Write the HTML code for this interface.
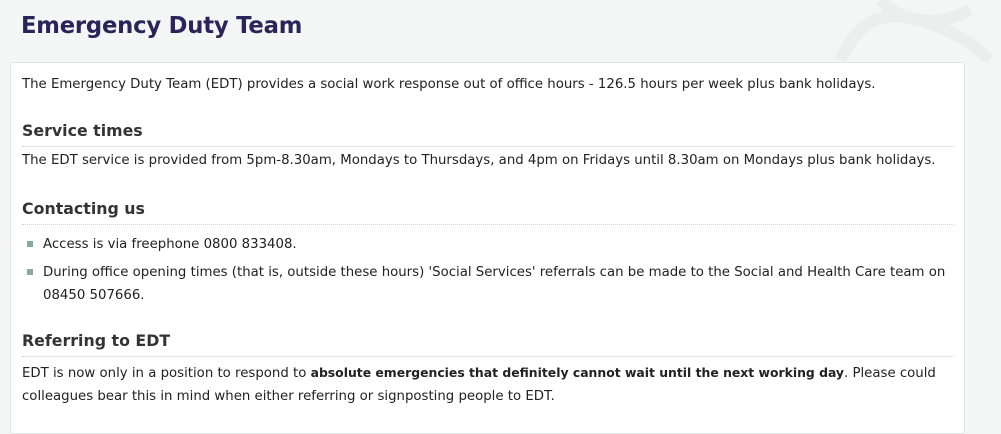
<!DOCTYPE html>
<html><head><style>
body{margin:0;width:1001px;height:414px;overflow:hidden;background:#f4f5f5;font-family:"DejaVu Sans",sans-serif;color:#222;position:relative}
h1{position:absolute;left:21px;top:13px;margin:0;font-size:22.7px;font-weight:bold;color:#2a2458;font-family:"DejaVu Sans",sans-serif;letter-spacing:-0.2px}
.card{position:absolute;left:10px;top:62px;width:953px;height:370px;background:#fff;border:1px solid #e2e4e4;border-radius:3px}
.t{position:absolute;left:11px;font-size:13.3px;white-space:nowrap;line-height:23px}
.t b{font-size:12.4px}
h2{position:absolute;left:11px;width:932px;margin:0;font-size:15.8px;font-weight:bold;color:#333;border-bottom:1px dotted #d0d0d0;padding-bottom:3px;line-height:24px}
.b{position:absolute;left:16px;width:6px;height:6px;background:#8aa7a0}
</style></head><body>
<svg style="position:absolute;left:820px;top:0" width="180" height="62"><g fill="none" stroke="#eceeee" stroke-width="12"><path d="M20 60 C40 20 60 10 100 20 C130 30 150 40 170 60"/><path d="M60 0 C80 20 110 30 150 10"/></g></svg>
<h1>Emergency Duty Team</h1>
<div class="card">
<div class="t" style="top:10px">The Emergency Duty Team (EDT) provides a social work response out of office hours - 126.5 hours per week plus bank holidays.</div>
<h2 style="top:56px">Service times</h2>
<div class="t" style="top:86px">The EDT service is provided from 5pm-8.30am, Mondays to Thursdays, and 4pm on Fridays until 8.30am on Mondays plus bank holidays.</div>
<h2 style="top:134px">Contacting us</h2>
<div class="b" style="top:178px"></div>
<div class="t" style="left:32px;top:170px">Access is via freephone 0800 833408.</div>
<div class="b" style="top:206px"></div>
<div class="t" style="left:32px;top:198px">During office opening times (that is, outside these hours) 'Social Services' referrals can be made to the Social and Health Care team on<br>08450 507666.</div>
<h2 style="top:266px">Referring to EDT</h2>
<div class="t" style="top:298px">EDT is now only in a position to respond to <b>absolute emergencies that definitely cannot wait until the next working day</b>. Please could<br>colleagues bear this in mind when either referring or signposting people to EDT.</div>
</div>
</body></html>
